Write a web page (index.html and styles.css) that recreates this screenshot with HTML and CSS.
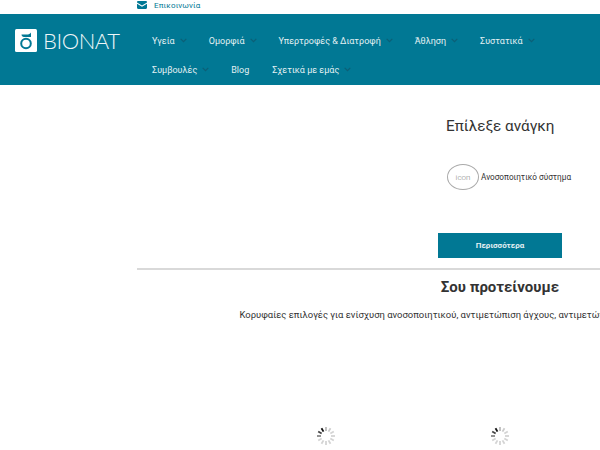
FILE: index.html
```html
<!DOCTYPE html>
<html lang="el">
<head>
<meta charset="utf-8">
<title>Bionat</title>
<link rel="stylesheet" href="styles.css">
</head>
<body>
<div class="topbar">
  <a class="contact" href="#">
    <svg class="mail" width="10" height="8" viewBox="0 0 10 8"><path d="M0 1.2C0 .5.5 0 1.2 0h7.6c.7 0 1.2.5 1.2 1.2v.3L5 4.400 0 1.500zM0 2.800l5 2.900 5-2.900v4C10 7.500 9.500 8 8.800 8H1.200C.5 8 0 7.500 0 6.800z"/></svg>
    <span>Επικοινωνία</span>
  </a>
</div>
<header class="navbar">
  <a class="logo" href="#">
    <svg class="logo-mark" width="22" height="23" viewBox="0 0 22 23">
      <rect width="22" height="23" rx="1.500" fill="#fff"/>
      <circle cx="11" cy="14.500" r="4.800" fill="none" stroke="#017894" stroke-width="2"/>
      <path d="M6.500 5.500H12c1.500 0 3-.5 4-2V8H9C7.500 8 6.500 7 6.500 5.500z" fill="#017894"/>
    </svg>
    <span class="logo-text">BIONAT</span>
  </a>
  <nav class="menu">
    <a class="item" href="#">Υγεία<svg class="chev" viewBox="0 0 7 5"><path d="M.7.8l2.800 2.800L6.300.8"/></svg></a>
    <a class="item" href="#">Ομορφιά<svg class="chev" viewBox="0 0 7 5"><path d="M.7.8l2.800 2.800L6.300.8"/></svg></a>
    <a class="item" href="#">Υπερτροφές &amp; Διατροφή<svg class="chev" viewBox="0 0 7 5"><path d="M.7.8l2.800 2.800L6.300.8"/></svg></a>
    <a class="item" href="#">Άθληση<svg class="chev" viewBox="0 0 7 5"><path d="M.7.8l2.800 2.800L6.300.8"/></svg></a>
    <a class="item" href="#">Συστατικά<svg class="chev" viewBox="0 0 7 5"><path d="M.7.8l2.800 2.800L6.300.8"/></svg></a>
    <a class="item" href="#">Συμβουλές<svg class="chev" viewBox="0 0 7 5"><path d="M.7.8l2.800 2.800L6.300.8"/></svg></a>
    <a class="item" href="#">Blog</a>
    <a class="item" href="#">Σχετικά με εμάς<svg class="chev" viewBox="0 0 7 5"><path d="M.7.8l2.800 2.800L6.300.8"/></svg></a>
  </nav>
</header>
<main class="main">
  <section class="needs">
    <h2 class="needs-title">Επίλεξε ανάγκη</h2>
    <div class="need">
      <span class="icon-ph">icon</span>
      <span class="need-label">Ανοσοποιητικό σύστημα</span>
    </div>
    <a class="more" href="#">Περισσότερα</a>
  </section>
  <section class="recommend">
    <h2 class="rec-title">Σου προτείνουμε</h2>
    <p class="rec-text">Κορυφαίες επιλογές για ενίσχυση ανοσοποιητικού, αντιμετώπιση άγχους, αντιμετώπιση κούρασης και πολλά άλλα για εσένα</p>
    <div class="loaders">
      <svg class="spinner" viewBox="-10 -10 20 20"><g><line class="s1" x1="0" y1="-5" x2="0" y2="-9"/><line class="s2" x1="0" y1="-5" x2="0" y2="-9" transform="rotate(30)"/><line class="s3" x1="0" y1="-5" x2="0" y2="-9" transform="rotate(60)"/><line class="s3" x1="0" y1="-5" x2="0" y2="-9" transform="rotate(90)"/><line class="s3" x1="0" y1="-5" x2="0" y2="-9" transform="rotate(120)"/><line class="s3" x1="0" y1="-5" x2="0" y2="-9" transform="rotate(150)"/><line class="s3" x1="0" y1="-5" x2="0" y2="-9" transform="rotate(180)"/><line class="s3" x1="0" y1="-5" x2="0" y2="-9" transform="rotate(210)"/><line class="s3" x1="0" y1="-5" x2="0" y2="-9" transform="rotate(240)"/><line class="s4" x1="0" y1="-5" x2="0" y2="-9" transform="rotate(270)"/><line class="s5" x1="0" y1="-5" x2="0" y2="-9" transform="rotate(300)"/><line class="s6" x1="0" y1="-5" x2="0" y2="-9" transform="rotate(330)"/></g></svg>
      <svg class="spinner" viewBox="-10 -10 20 20"><g><line class="s1" x1="0" y1="-5" x2="0" y2="-9"/><line class="s2" x1="0" y1="-5" x2="0" y2="-9" transform="rotate(30)"/><line class="s3" x1="0" y1="-5" x2="0" y2="-9" transform="rotate(60)"/><line class="s3" x1="0" y1="-5" x2="0" y2="-9" transform="rotate(90)"/><line class="s3" x1="0" y1="-5" x2="0" y2="-9" transform="rotate(120)"/><line class="s3" x1="0" y1="-5" x2="0" y2="-9" transform="rotate(150)"/><line class="s3" x1="0" y1="-5" x2="0" y2="-9" transform="rotate(180)"/><line class="s3" x1="0" y1="-5" x2="0" y2="-9" transform="rotate(210)"/><line class="s3" x1="0" y1="-5" x2="0" y2="-9" transform="rotate(240)"/><line class="s4" x1="0" y1="-5" x2="0" y2="-9" transform="rotate(270)"/><line class="s5" x1="0" y1="-5" x2="0" y2="-9" transform="rotate(300)"/><line class="s6" x1="0" y1="-5" x2="0" y2="-9" transform="rotate(330)"/></g></svg>
    </div>
  </section>
</main>
</body>
</html>
```
FILE: styles.css
```css
* { box-sizing: border-box; }
html, body { margin: 0; padding: 0; height: 450px; overflow: hidden; background: #fff; }
body { font-family: Roboto, "Noto Sans", sans-serif; color: #333; width: 600px; }
a { text-decoration: none; color: inherit; }

.topbar { height: 14px; padding-left: 137px; }
.contact { display: flex; align-items: center; gap: 7px; height: 10px; font-size: 8px; color: #017894; letter-spacing: .15px; }
.mail { fill: #017894; }

.navbar { height: 71px; background: #017894; display: flex; padding-left: 15px; color: #e3f0f3; }
.logo { display: flex; align-items: center; gap: 6px; height: 23px; margin-top: 15px; width: 120px; flex: none; }
.logo-text { font-family: Lato, sans-serif; font-size: 22px; font-weight: 300; letter-spacing: -.45px; color: #eef6f8; }
.menu { display: flex; flex-wrap: wrap; padding: 12px 0 0 17px; align-content: flex-start; width: 440px; }
.item { display: flex; align-items: center; height: 29px; font-size: 9px; padding-right: 23px; white-space: nowrap; }
.chev { width: 7px; height: 5px; margin-left: 5px; margin-right: -1px; fill: none; stroke: #0c5f76; stroke-width: 1.200; }

.main { margin-left: 137px; width: 726px; }
.needs { height: 185px; padding-left: 301px; border-bottom: 2px solid #d9d9d9; }
.needs-title { margin: 0; padding-top: 32px; padding-left: 8px; font-size: 15.300px; line-height: 19px; font-weight: 400; color: #333; }
.need { display: flex; align-items: center; gap: 2px; margin-top: 28px; padding-left: 9px; }
.icon-ph { display: flex; align-items: center; justify-content: center; width: 32px; height: 26px; border: 1px solid #aaa; border-radius: 50%; font-size: 8px; font-weight: 300; color: #888; }
.need-label { font-size: 8.200px; color: #333; white-space: nowrap; }
.more { display: flex; align-items: center; justify-content: center; width: 124px; height: 25px; margin-top: 43px; background: #017894; color: #e3f0f3; font-size: 8px; font-weight: 700; }

.recommend { display: flex; flex-direction: column; align-items: center; }
.rec-title { margin: 8px 0 0; font-size: 15px; line-height: 18px; font-weight: 700; color: #333; }
.rec-text { margin: 13px 0 0 -1px; font-size: 9.450px; line-height: 12px; color: #333; white-space: nowrap; width: 520px; text-align: left; }
.loaders { display: flex; gap: 154px; margin-top: 105px; width: 726px; padding-left: 179px; }
.spinner { width: 20px; height: 20px; flex: none; }
.spinner line { stroke-width: 1.800; }
.s1 { stroke: #bbb; }
.s2 { stroke: #ccc; }
.s3 { stroke: #d4d4d4; }
.s4 { stroke: #888; }
.s5 { stroke: #444; }
.s6 { stroke: #111; }
```
